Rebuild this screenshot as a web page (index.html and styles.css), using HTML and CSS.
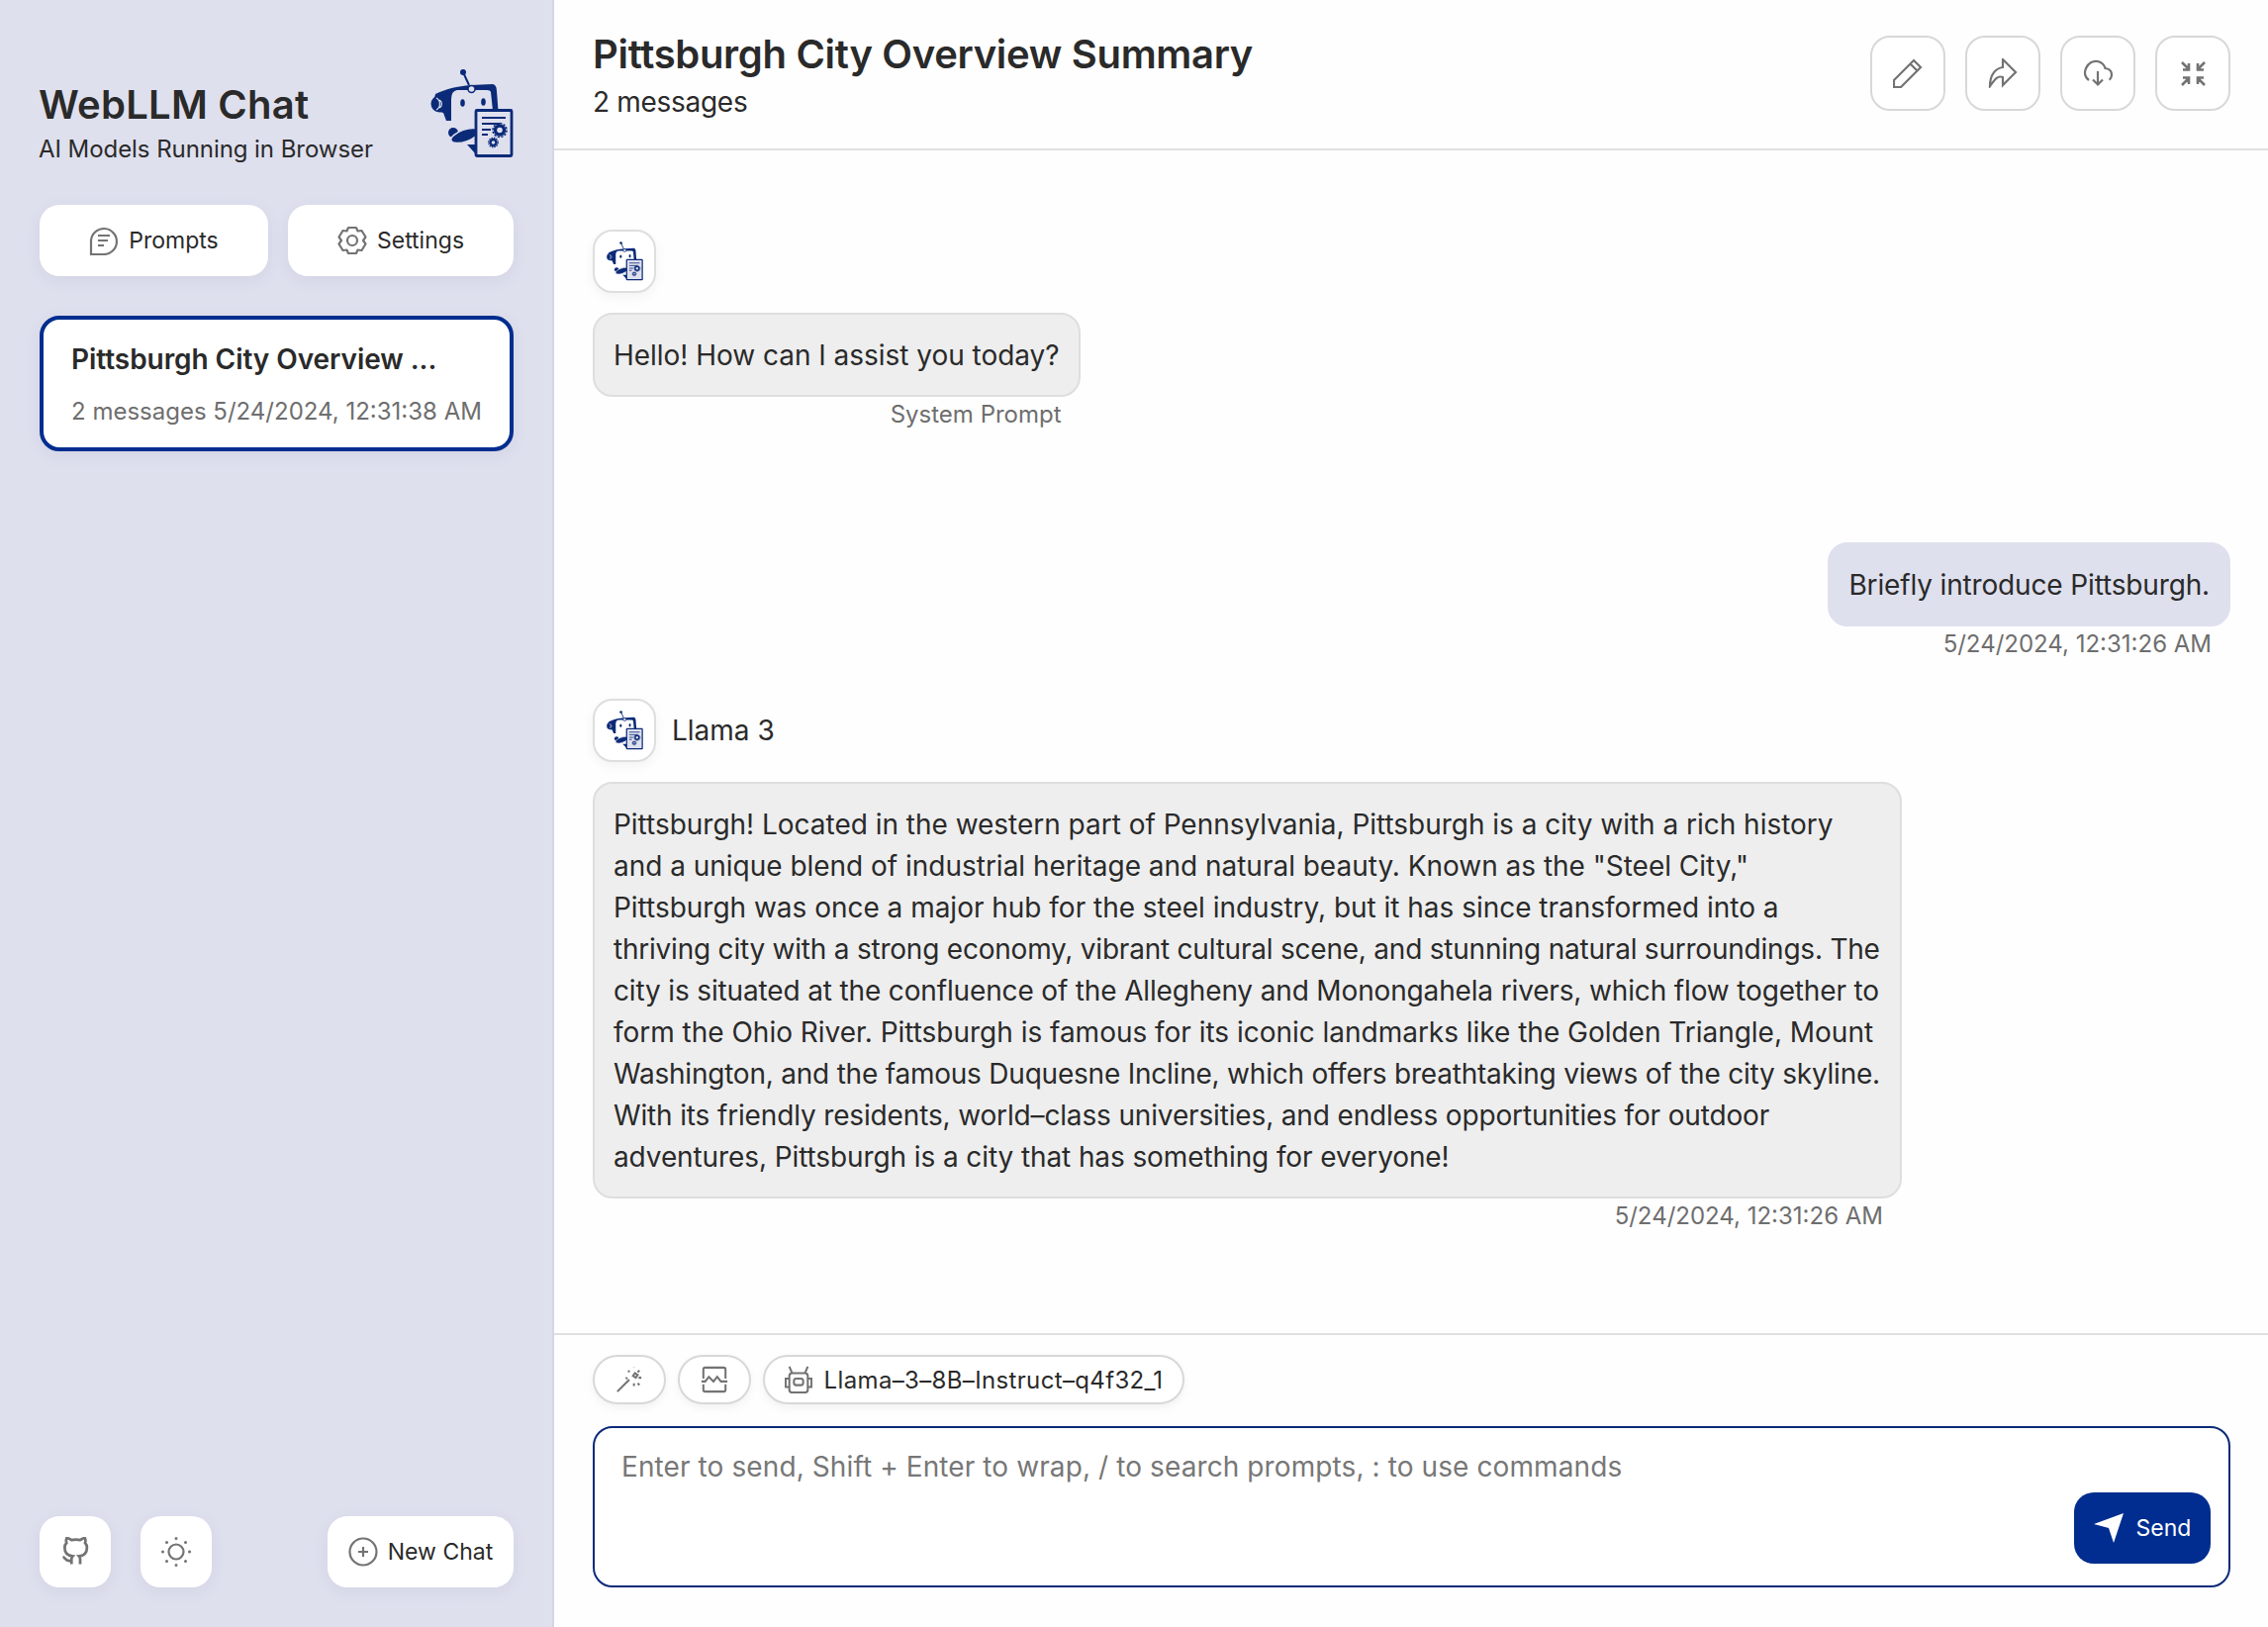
FILE: index.html
```html
<!DOCTYPE html>
<html lang="en">
<head>
<meta charset="utf-8">
<title>WebLLM Chat</title>
<link rel="stylesheet" href="styles.css">
</head>
<body>
<svg class="defs" aria-hidden="true">
  <symbol id="logo" viewBox="15 20 84 90">
    <circle cx="48" cy="23" r="3" fill="#0b2a78"/>
    <path d="M48 23l6 13" stroke="#0b2a78" stroke-width="2" fill="none"/>
    <path d="M20 45C30 40 42 37 56 36L78 35Q82 36 82 42L83.500 62H78L76 43Q75.500 41 72 41H42Q36 42 36 50V72H31L28 64Q18 62 18 54Z" fill="#0b2a78"/>
    <circle cx="24" cy="55" r="8.500" fill="#0b2a78"/>
    <path d="M21 49a7 7 0 0 1 0 12M24 51a4.500 4.500 0 0 1 0 8" stroke="#dfe0ee" stroke-width="1.200" fill="none"/>
    <circle cx="56.500" cy="40" r="3.500" fill="#dfe0ee" stroke="#0b2a78" stroke-width="1.500"/>
    <ellipse cx="47.500" cy="54" rx="2.300" ry="3.800" fill="#0b2a78"/>
    <ellipse cx="68.500" cy="53" rx="2.300" ry="3.800" fill="#0b2a78"/>
    <ellipse cx="38" cy="84" rx="5" ry="5" fill="#0b2a78"/>
    <ellipse cx="50" cy="87" rx="15" ry="6" transform="rotate(-20 50 87)" fill="#0b2a78" stroke="#dfe0ee" stroke-width="1.500"/>
    <path d="M52 96l9 0v10z" fill="#0b2a78"/>
    <rect x="61" y="61.500" width="36" height="46" rx="1" fill="#dfe0ee" stroke="#0b2a78" stroke-width="2.800"/>
    <path d="M67 69h24M67 75h18M67 81h9M67 86h6" stroke="#0b2a78" stroke-width="1.800" fill="none"/>
    <circle cx="85" cy="81.500" r="4.500" fill="none" stroke="#0b2a78" stroke-width="3.400"/>
    <circle cx="85" cy="81.500" r="7" fill="none" stroke="#0b2a78" stroke-width="1.500" stroke-dasharray="2.200 1.460"/>
    <circle cx="78.500" cy="94" r="3" fill="none" stroke="#0b2a78" stroke-width="2.400"/>
    <circle cx="78.500" cy="94" r="4.800" fill="none" stroke="#0b2a78" stroke-width="1.200" stroke-dasharray="1.500 1"/>
  </symbol>
</svg>
<div class="app">
  <aside class="sidebar">
    <div class="brand">
      <div class="brand-text">
        <div class="brand-title">WebLLM Chat</div>
        <div class="brand-sub">AI Models Running in Browser</div>
      </div>
      <svg class="brand-logo"><use href="#logo"/></svg>
    </div>
    <div class="side-actions">
      <button class="side-btn">
        <svg class="ico" viewBox="0 0 30 30"><path d="M2 29V15A13 13 0 1 1 15 29H2Z M9 10h12M9 15h10M9 20h6"/></svg>
        <span>Prompts</span>
      </button>
      <button class="side-btn">
        <svg class="ico" viewBox="0 0 30 30"><path d="M11 2h8l1.500 3.500 4-.5 4 6.500L26 15l2.500 3.500-4 6.500-4-.5L19 28h-8l-1.500-3.500-4 .5-4-6.500L4 15l-2.500-3.500 4-6.500 4 .5Z" stroke-linejoin="round"/><circle cx="15" cy="15" r="5"/></svg>
        <span>Settings</span>
      </button>
    </div>
    <div class="chat-item">
      <div class="chat-title">Pittsburgh City Overview ...</div>
      <div class="chat-info">2 messages 5/24/2024, 12:31:38 AM</div>
    </div>
    <div class="side-foot">
      <button class="side-btn square">
        <svg class="ico" viewBox="0 0 24 24"><path d="M9 19c-5 1.500-5-2.500-7-3m14 6v-3.870a3.370 3.370 0 0 0-.94-2.610c3.140-.35 6.440-1.540 6.440-7A5.440 5.440 0 0 0 20 4.770 5.070 5.070 0 0 0 19.910 1S18.730.65 16 2.480a13.380 13.380 0 0 0-7 0C6.270.65 5.090 1 5.090 1A5.070 5.070 0 0 0 5 4.770a5.440 5.440 0 0 0-1.500 3.780c0 5.420 3.300 6.610 6.440 7A3.370 3.370 0 0 0 9 18.130V22"/></svg>
      </button>
      <button class="side-btn square">
        <svg class="ico" viewBox="0 0 30 30"><circle cx="15" cy="15" r="7.500"/><path class="dots" d="M15 1.500v.01M15 28.500v.01M1.500 15h.01M28.500 15h.01M5.500 5.500h.01M24.500 5.500h.01M5.500 24.500h.01M24.500 24.500h.01"/></svg>
      </button>
      <button class="side-btn new-chat">
        <svg class="ico" viewBox="0 0 30 30"><circle cx="15" cy="15" r="13.500"/><path d="M15 10v10M10 15h10"/></svg>
        <span>New Chat</span>
      </button>
    </div>
  </aside>
  <main class="main">
    <header class="head">
      <div class="head-text">
        <div class="head-title">Pittsburgh City Overview Summary</div>
        <div class="head-sub">2 messages</div>
      </div>
      <div class="head-actions">
        <button class="head-btn"><svg class="ico" viewBox="0 0 30 30"><path d="M1 29v-7L21 2l7 7L8 29ZM17.500 5.500l7 7"/></svg></button>
        <button class="head-btn"><svg class="ico" viewBox="0 0 30 30"><path d="M2 28C2 16 8 10 15 9V1l13 13-13 13v-8C10 17 7 21 2 28Z" stroke-linejoin="miter"/></svg></button>
        <button class="head-btn"><svg class="ico" viewBox="0 0 30 30"><path d="M6 22C2 19 1 15 3 10 5 5 10 2 15 3c4 1 6.500 3.500 7.500 7 4 .5 6.500 3 6.500 6.500 0 2-.8 3.800-2.300 5.200M15 13v13M10 21.500l5 5 5-5"/></svg></button>
        <button class="head-btn"><svg class="ico small" viewBox="0 0 25 25"><path d="M1 1l7 7M8 2v6.500H2M24 1l-7 7M17 2v6.500h6M1 24l7-7M8 23v-6.500H2M24 24l-7-7M17 23v-6.500h6"/></svg></button>
      </div>
    </header>
    <section class="messages">
      <article class="msg">
        <div class="msg-head">
          <div class="avatar"><svg class="avatar-logo"><use href="#logo"/></svg></div>
        </div>
        <div class="bubble-wrap">
          <div class="bubble">Hello! How can I assist you today?</div>
          <div class="status">System Prompt</div>
        </div>
      </article>
      <article class="msg user">
        <div class="bubble-wrap">
          <div class="bubble">Briefly introduce Pittsburgh.</div>
          <div class="status">5/24/2024, 12:31:26 AM</div>
        </div>
      </article>
      <article class="msg">
        <div class="msg-head">
          <div class="avatar"><svg class="avatar-logo"><use href="#logo"/></svg></div>
          <div class="model">Llama 3</div>
        </div>
        <div class="bubble-wrap long">
          <div class="bubble"><span class="ln">Pittsburgh! Located in the western part of Pennsylvania, Pittsburgh is a city with a rich history</span> <span class="ln">and a unique blend of industrial heritage and natural beauty. Known as the "Steel City,"</span> <span class="ln">Pittsburgh was once a major hub for the steel industry, but it has since transformed into a</span> <span class="ln tight">thriving city with a strong economy, vibrant cultural scene, and stunning natural surroundings. The</span> <span class="ln mid">city is situated at the confluence of the Allegheny and Monongahela rivers, which flow together to</span> <span class="ln">form the Ohio River. Pittsburgh is famous for its iconic landmarks like the Golden Triangle, Mount</span> <span class="ln tight">Washington, and the famous Duquesne Incline, which offers breathtaking views of the city skyline.</span> <span class="ln mid">With its friendly residents, world–class universities, and endless opportunities for outdoor</span> <span class="ln last">adventures, Pittsburgh is a city that has something for everyone!</span></div>
          <div class="status">5/24/2024, 12:31:26 AM</div>
        </div>
      </article>
    </section>
    <footer class="composer">
      <div class="chips">
        <button class="chip"><svg class="ico" viewBox="0 0 30 30"><path d="M2 28L15 15M20 2v.01M14 5l1 2M26 5l-2 2M28 13h-3M26 21l-2-2M20 22v-3M13 14l-2-1M21 8l-2 3 3 2 2-3Z"/></svg></button>
        <button class="chip"><svg class="ico" viewBox="0 0 30 30"><path d="M3 14V4q0-2 2-2h20q2 0 2 2v10M3 20v6q0 2 2 2h20q2 0 2-2v-6M1 17h4l4-5 5 5 4-5 4 5h7"/></svg></button>
        <button class="chip model-chip">
          <svg class="ico" viewBox="0 0 30 30"><path d="M8 8L5 1M22 8l3-7"/><rect x="5" y="8" width="20" height="21" rx="3"/><rect x="10" y="14" width="10" height="7" rx="2.500"/><path d="M5 14H1v9h4M25 14h4v9h-4"/></svg>
          <span class="model-name">Llama–3–8B–Instruct–q4f32_1</span>
        </button>
      </div>
      <div class="input-wrap">
        <textarea class="input" placeholder="Enter to send, Shift + Enter to wrap, / to search prompts, : to use commands"></textarea>
        <button class="send">
          <svg class="send-ico" viewBox="0 0 30 30"><path d="M0 11L30 0 20 30 15 15Z"/></svg>
          <span>Send</span>
        </button>
      </div>
    </footer>
  </main>
</div>
</body>
</html>
```
FILE: styles.css
```css
* { box-sizing: border-box; }
html, body { margin: 0; height: 100%; }
body {
  font-family: Inter, "Liberation Sans", sans-serif;
  color: #2a2a2a;
  background: #fefefe;
  overflow: hidden;
}
button { font: inherit; color: inherit; cursor: pointer; }
.defs { position: absolute; width: 0; height: 0; }
.app { display: flex; height: 100vh; }

.ico { fill: none; stroke: #737373; stroke-width: 2.200; flex: none; }
.ico .dots { stroke-width: 3; stroke-linecap: round; }

.sidebar {
  width: 560px;
  flex: none;
  background: #dfe0ee;
  padding: 70px 39px 40px 40px;
  display: flex;
  flex-direction: column;
  border-right: 2px solid #d5d6e4;
}
.brand { display: flex; justify-content: space-between; align-items: flex-start; height: 137px; }
.brand-text { padding-top: 13px; }
.brand-title { font-size: 40px; font-weight: 600; line-height: 46px; margin-left: -1px; letter-spacing: .25px; }
.brand-sub { font-size: 24px; line-height: 30px; margin-top: 7px; margin-left: -1px; letter-spacing: -.06px; }
.brand-logo { width: 84px; height: 90px; flex: none; }

.side-actions { display: grid; grid-template-columns: 231fr 228fr; gap: 20px; }
.side-btn {
  height: 72px;
  border: 0;
  border-radius: 20px;
  background: #fff;
  box-shadow: 0 4px 16px rgba(80, 80, 120, .08);
  display: flex;
  align-items: center;
  justify-content: center;
  gap: 10px;
  font-size: 23px;
  padding: 0;
}
.side-btn .ico { width: 30px; height: 30px; }
.square { width: 72px; }
.new-chat { width: 188px; margin-left: auto; }

.chat-item {
  margin-top: 40px;
  height: 137px;
  border: 4px solid #002d8f;
  border-radius: 20px;
  background: #fff;
  padding: 22px 28px;
  box-shadow: 0 4px 16px rgba(80, 80, 120, .08);
}
.chat-title { font-size: 28px; font-weight: 600; line-height: 36px; white-space: nowrap; letter-spacing: -.06px; }
.chat-info { font-size: 24px; line-height: 30px; color: #6e6e6e; margin-top: 20px; white-space: nowrap; }
.side-foot { margin-top: auto; display: flex; gap: 30px; }

.main { flex: 1; min-width: 0; display: flex; flex-direction: column; }
.head {
  height: 152px;
  flex: none;
  border-bottom: 2px solid #e0e0e0;
  padding: 30px 38px 0 39px;
  display: flex;
  justify-content: space-between;
  align-items: flex-start;
}
.head-title { font-size: 40px; font-weight: 600; line-height: 50px; letter-spacing: -.32px; }
.head-sub { font-size: 28px; line-height: 34px; margin-top: 6px; letter-spacing: -.3px; }
.head-actions { display: flex; gap: 20px; padding-top: 6px; }
.head-btn {
  width: 76px;
  height: 76px;
  background: #fff;
  border: 2px solid #d8d8d8;
  border-radius: 20px;
  display: flex;
  align-items: center;
  justify-content: center;
  padding: 0;
}
.head-btn .ico { width: 30px; height: 30px; }
.head-btn .ico.small { width: 25px; height: 25px; stroke-width: 2.600; }

.messages { flex: 1; min-height: 0; padding: 80px 38px 0 39px; }
.msg { display: flex; flex-direction: column; align-items: flex-start; }
.msg.user { align-items: flex-end; margin-top: 111px; margin-bottom: 37px; }
.msg-head { display: flex; align-items: center; gap: 16px; margin-bottom: 20px; }
.avatar {
  width: 64px;
  height: 64px;
  border: 2px solid #dedede;
  border-radius: 20px;
  background: #fff;
  box-shadow: 0 4px 12px rgba(0, 0, 0, .05);
  display: flex;
  align-items: center;
  justify-content: center;
}
.avatar-logo { width: 37px; height: 40px; }
.model { font-size: 28px; }
.bubble-wrap { display: flex; flex-direction: column; align-items: flex-end; }
.bubble-wrap.long { width: 1323px; }
.bubble {
  font-size: 28px;
  line-height: 42px;
  padding: 20px 19px 19px;
  border: 2px solid #dedede;
  border-radius: 20px;
  background: #eeeeee;
  letter-spacing: -.03px;
}
.long .bubble { width: 100%; }
.ln { display: block; white-space: nowrap; letter-spacing: -.02px; }
.ln.tight { letter-spacing: -.22px; }
.ln.mid { letter-spacing: -.15px; }
.ln.last { letter-spacing: -.1px; }
.user .bubble { background: #dfe0ee; border-color: #dfe0ee; letter-spacing: -.15px; }
.status { font-size: 24px; line-height: 36px; color: #6e6e6e; padding-right: 19px; }

.composer { flex: none; border-top: 2px solid #e0e0e0; padding: 20px 38px 40px 39px; }
.chips { display: flex; gap: 12px; }
.chip {
  height: 50px;
  min-width: 74px;
  background: #fff;
  border: 2px solid #d8d8d8;
  border-radius: 25px;
  box-shadow: 0 4px 10px rgba(0, 0, 0, .05);
  display: flex;
  align-items: center;
  justify-content: center;
  gap: 12px;
  padding: 0;
  font-size: 24px;
}
.chip .ico { width: 28px; height: 28px; }
.model-chip { width: 426px; }
.model-name { letter-spacing: .35px; }
.input-wrap { position: relative; margin-top: 22px; height: 163px; }
.input {
  display: block;
  width: 100%;
  height: 100%;
  resize: none;
  border: 2px solid #0b2a78;
  border-radius: 20px;
  background: #fff;
  padding: 21px 27px;
  font: 28px/36px Inter, "Liberation Sans", sans-serif;
  letter-spacing: .1px;
  color: #2a2a2a;
  outline: none;
}
.input::placeholder { color: #777; opacity: 1; }
.send {
  position: absolute;
  right: 20px;
  bottom: 24px;
  width: 138px;
  height: 72px;
  background: #002d8f;
  color: #fff;
  border: 0;
  border-radius: 20px;
  display: flex;
  align-items: center;
  justify-content: center;
  gap: 13px;
  font-size: 23px;
  padding: 0;
}
.send-ico { width: 30px; height: 30px; fill: #fff; flex: none; }
```
